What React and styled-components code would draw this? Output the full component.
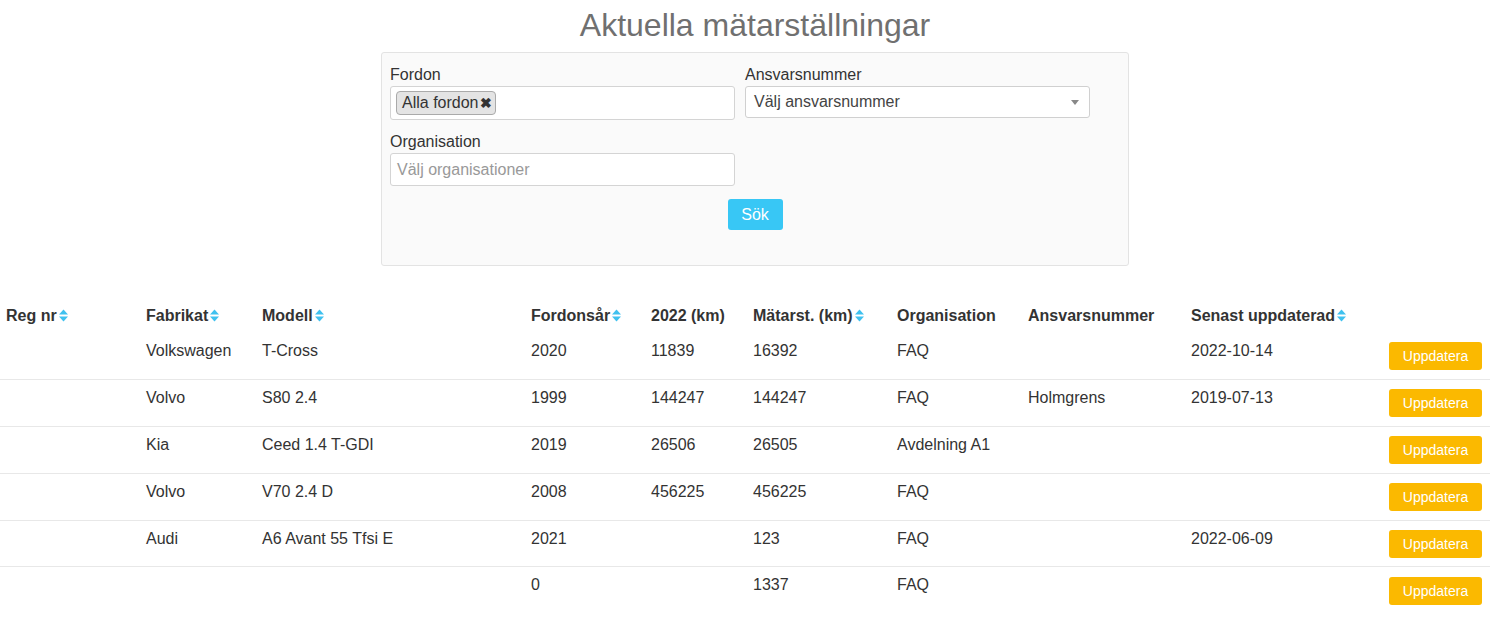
import React from 'react'
import styled, { createGlobalStyle } from 'styled-components'

const GlobalStyle = createGlobalStyle`
body{
    margin:0;
    background:#fff;
    font-family:"Liberation Sans", Arial, sans-serif;
    font-size:16px;
    color:#333;
}
*{ box-sizing:border-box; }
`;

const rows = [
    { reg: '', make: 'Volkswagen', model: 'T-Cross', year: '2020', km22: '11839', odo: '16392', org: 'FAQ', resp: '', updated: '2022-10-14' },
    { reg: '', make: 'Volvo', model: 'S80 2.4', year: '1999', km22: '144247', odo: '144247', org: 'FAQ', resp: 'Holmgrens', updated: '2019-07-13' },
    { reg: '', make: 'Kia', model: 'Ceed 1.4 T-GDI', year: '2019', km22: '26506', odo: '26505', org: 'Avdelning A1', resp: '', updated: '' },
    { reg: '', make: 'Volvo', model: 'V70 2.4 D', year: '2008', km22: '456225', odo: '456225', org: 'FAQ', resp: '', updated: '' },
    { reg: '', make: 'Audi', model: 'A6 Avant 55 Tfsi E', year: '2021', km22: '', odo: '123', org: 'FAQ', resp: '', updated: '2022-06-09' },
    { reg: '', make: '', model: '', year: '0', km22: '', odo: '1337', org: 'FAQ', resp: '', updated: '' },
];

const columns = [
    { label: 'Reg nr', width: 140, sort: true },
    { label: 'Fabrikat', width: 116, sort: true },
    { label: 'Modell', width: 269, sort: true },
    { label: 'Fordonsår', width: 120, sort: true },
    { label: '2022 (km)', width: 102 },
    { label: 'Mätarst. (km)', width: 144, sort: true },
    { label: 'Organisation', width: 131 },
    { label: 'Ansvarsnummer', width: 163 },
    { label: 'Senast uppdaterad', width: 198, sort: true },
    { label: '', width: 107 },
];

function SortIcon() {
    return (
        <SortSvg width="9" height="13" viewBox="0 0 9 13">
            <path d="M4.5 0.5 L9 5.5 L0 5.5 Z" fill="#3fc1ef" />
            <path d="M0 7.5 L9 7.5 L4.5 12.5 Z" fill="#3fc1ef" />
        </SortSvg>
    )
}

function App() {
    return (
        <>
            <GlobalStyle />
            <Top>
                <Title>Aktuella mätarställningar</Title>
                <Panel>
                    <FormGrid>
                        <Field>
                            <Label>Fordon</Label>
                            <TagBox>
                                <Tag>Alla fordon<TagClose>✖</TagClose></Tag>
                            </TagBox>
                        </Field>
                        <Field>
                            <Label>Ansvarsnummer</Label>
                            <Select>
                                <span>Välj ansvarsnummer</span>
                                <Caret />
                            </Select>
                        </Field>
                        <Field>
                            <Label>Organisation</Label>
                            <TextInput>Välj organisationer</TextInput>
                        </Field>
                    </FormGrid>
                    <ButtonRow>
                        <SearchButton>Sök</SearchButton>
                    </ButtonRow>
                </Panel>
            </Top>

            <Table>
                <colgroup>
                    {columns.map((c, i) => <col key={i} style={{ width: c.width }} />)}
                </colgroup>
                <thead>
                    <tr>
                        {columns.map((c, i) => (
                            <Th key={i}>{c.label}{c.sort && <SortIcon />}</Th>
                        ))}
                    </tr>
                </thead>
                <tbody>
                    {rows.map((r, i) => (
                        <Tr key={i} last={i === rows.length - 1}>
                            <Td>{r.reg}</Td>
                            <Td>{r.make}</Td>
                            <Td>{r.model}</Td>
                            <Td>{r.year}</Td>
                            <Td>{r.km22}</Td>
                            <Td>{r.odo}</Td>
                            <Td>{r.org}</Td>
                            <Td>{r.resp}</Td>
                            <Td>{r.updated}</Td>
                            <ButtonTd><UpdateButton>Uppdatera</UpdateButton></ButtonTd>
                        </Tr>
                    ))}
                </tbody>
            </Table>
        </>
    )
}

export default App

const Top = styled.div`
padding-left:15px;
display:flex;
flex-direction:column;
align-items:center;
`;

const Title = styled.h1`
margin:7px 0 8px;
font-size:32px;
line-height:37px;
font-weight:400;
color:#707070;
`;

const Panel = styled.div`
width:748px;
height:214px;
background:#fafafa;
border:1px solid #e3e3e3;
border-radius:3px;
padding:10px 8px 0;
`;

const FormGrid = styled.div`
display:grid;
grid-template-columns:345px 345px;
column-gap:10px;
row-gap:10px;
align-items:start;
`;

const Field = styled.div`
display:flex;
flex-direction:column;
`;

const Label = styled.label`
font-size:16px;
line-height:23px;
color:#333;
`;

const TagBox = styled.div`
height:34px;
background:#fff;
border:1px solid #d4d4d4;
border-radius:3px;
padding:4px 5px;
display:flex;
align-items:center;
`;

const Tag = styled.span`
display:inline-flex;
align-items:center;
height:24px;
padding:0 3px 0 5px;
background:#e4e4e4;
border:1px solid #aaa;
border-radius:4px;
font-size:16px;
color:#333;
`;

const TagClose = styled.span`
font-size:14px;
font-weight:700;
margin-left:1px;
color:#333;
`;

const Select = styled.div`
height:32px;
background:#fff;
border:1px solid #d0d0d0;
border-radius:3px;
padding:0 10px 0 8px;
display:flex;
align-items:center;
justify-content:space-between;
font-size:16px;
color:#444;
`;

const Caret = styled.span`
width:0;
height:0;
border-left:4px solid transparent;
border-right:4px solid transparent;
border-top:5px solid #888;
`;

const TextInput = styled.div`
height:33px;
background:#fff;
border:1px solid #d4d4d4;
border-radius:3px;
padding:0 6px;
display:flex;
align-items:center;
font-size:16px;
color:#999;
`;

const ButtonRow = styled.div`
display:flex;
justify-content:center;
margin-top:13px;
`;

const SearchButton = styled.button`
width:55px;
height:31px;
border:none;
border-radius:3px;
background:#38c7f5;
color:#fff;
font-family:inherit;
font-size:16px;
padding:0;
`;

const Table = styled.table`
width:1490px;
table-layout:fixed;
border-collapse:collapse;
margin-top:31px;
`;

const Th = styled.th`
text-align:left;
font-weight:700;
font-size:16px;
line-height:20px;
padding:9px 6px 7px;
white-space:nowrap;
color:#333;
`;

const SortSvg = styled.svg`
margin-left:2px;
vertical-align:-1px;
`;

const Tr = styled.tr`
border-bottom:${props => props.last ? 'none' : '1px solid #e8e8e8'};
`;

const Td = styled.td`
height:46.8px;
vertical-align:top;
padding:8px 6px 0;
font-size:16px;
line-height:20px;
color:#333;
white-space:nowrap;
`;

const ButtonTd = styled.td`
vertical-align:middle;
padding:0 6px;
`;

const UpdateButton = styled.button`
width:93px;
height:28px;
border:none;
border-radius:3px;
background:#fbb900;
color:#fff;
font-family:inherit;
font-size:14px;
padding:0;
`;
